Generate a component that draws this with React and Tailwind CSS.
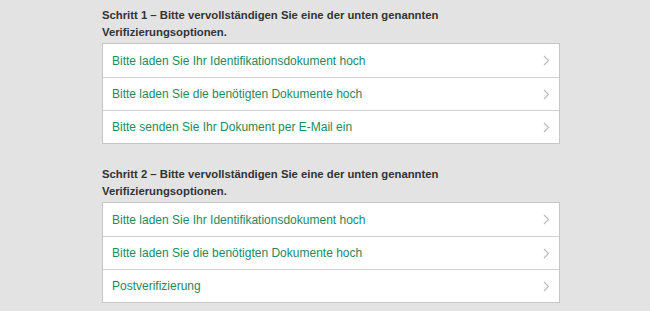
import React from "react";

const Chevron = () => (
  <svg width="7" height="11" viewBox="0 0 7 11" fill="none">
    <path d="M1 1l4.5 4.5L1 10" stroke="#b8b8b8" strokeWidth="1.1" />
  </svg>
);

const Section = ({ title, items, className }) => (
  <div className={className}>
    <h2 className="text-[11.3px] leading-[17px] font-bold text-[#333333] mb-[2px]">
      {title}
    </h2>
    <div className="border border-[#c6c6c6] bg-white">
      {items.map((t, i) => (
        <div
          key={i}
          className={`flex items-center justify-between h-[33px] pl-[9px] pr-[9px] ${
            i > 0 ? "border-t border-[#cfcfcf]" : ""
          }`}
        >
          <span className="text-[12px] text-[#1e8a5c]">{t}</span>
          <Chevron />
        </div>
      ))}
    </div>
  </div>
);

export default function App() {
  return (
    <div
      className="w-[650px] h-[311px] bg-[#e3e3e3] overflow-hidden pl-[102px] pt-[7px]"
      style={{ fontFamily: '"Liberation Sans", Arial, sans-serif' }}
    >
      <div className="w-[458px]">
        <Section
          title="Schritt 1 – Bitte vervollständigen Sie eine der unten genannten Verifizierungsoptionen."
          items={[
            "Bitte laden Sie Ihr Identifikationsdokument hoch",
            "Bitte laden Sie die benötigten Dokumente hoch",
            "Bitte senden Sie Ihr Dokument per E-Mail ein",
          ]}
        />
        <Section
          className="mt-[22px]"
          title="Schritt 2 – Bitte vervollständigen Sie eine der unten genannten Verifizierungsoptionen."
          items={[
            "Bitte laden Sie Ihr Identifikationsdokument hoch",
            "Bitte laden Sie die benötigten Dokumente hoch",
            "Postverifizierung",
          ]}
        />
      </div>
    </div>
  );
}
